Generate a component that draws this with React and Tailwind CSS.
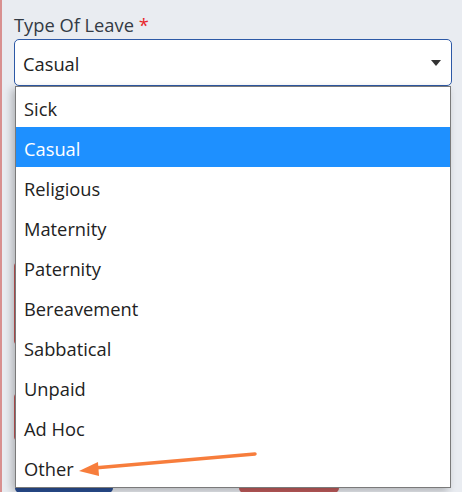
import React from "react";

const options = [
  "Sick",
  "Casual",
  "Religious",
  "Maternity",
  "Paternity",
  "Bereavement",
  "Sabbatical",
  "Unpaid",
  "Ad Hoc",
  "Other",
];

export default function App() {
  const selected = "Casual";

  return (
    <div
      className="relative w-[462px] h-[492px] overflow-hidden bg-[#e9ecf1] border-l-2 border-[#d89090]"
      style={{ fontFamily: '"Open Sans", "Noto Sans", sans-serif' }}
    >
      {/* Form behind the open list */}
      <div className="pl-[12px] pr-[10px] pt-[13px]">
        <label className="block text-[18.3px] leading-[24px] text-[#333a44]">
          Type Of Leave <span className="text-[#e8262b]">*</span>
        </label>
        <div className="mt-[2px] h-[47px] w-[438px] rounded-[5px] border border-[#2d59a6] bg-white flex items-center justify-between pl-[8px] pr-[10px]">
          <span className="text-[18.3px] pt-[2px] text-[#222]">Casual</span>
          <svg width="10" height="6" viewBox="0 0 10 6">
            <path d="M0 0 L10 0 L5 6 Z" fill="#333" />
          </svg>
        </div>

        <div className="mt-[175px] h-[85px] w-[437px] rounded-[5px] border border-[#c9585a] bg-white" />
        <div className="mt-[46px] h-[50px] w-[437px] rounded-[5px] border border-[#c9585a] bg-white" />

        <div className="mt-[11px] flex gap-[126px] pl-[1px]">
          <div className="h-[40px] w-[98px] rounded-[5px] bg-[#2a4f94]" />
          <div className="h-[40px] w-[100px] rounded-[5px] bg-[#c05c5c]" />
        </div>
      </div>

      {/* Open dropdown list */}
      <ul className="absolute left-[13px] top-[86px] w-[436px] border border-[#7a7a7a] bg-white shadow-[-3px_3px_8px_rgba(0,0,0,0.25)]">
        {options.map((o) => (
          <li
            key={o}
            className={
              "h-[40px] flex items-center pl-[8px] pt-[3px] text-[18.3px] " +
              (o === selected ? "bg-[#1e90ff] text-white" : "text-[#222]")
            }
          >
            {o}
          </li>
        ))}
      </ul>

      {/* Annotation arrow */}
      <svg className="absolute left-0 top-0 pointer-events-none" width="462" height="492">
        <line x1="253" y1="454" x2="92" y2="468" stroke="#f77d3c" strokeWidth="3.5" strokeLinecap="round" />
        <path d="M77 471 L96 462 L97 476 Z" fill="#f77d3c" />
      </svg>
    </div>
  );
}
